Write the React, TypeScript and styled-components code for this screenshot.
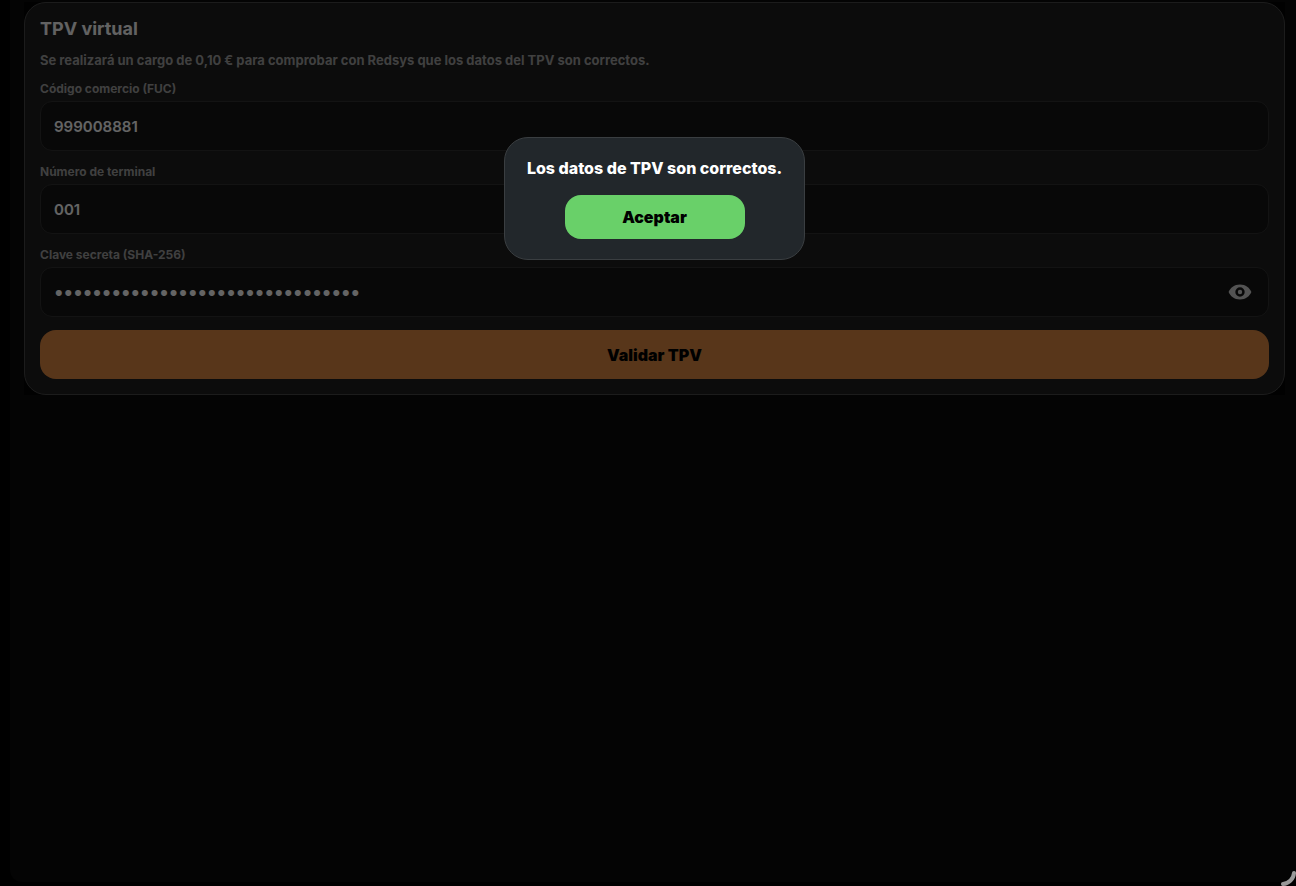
import React, { useState } from "react";
import styled, { createGlobalStyle } from "styled-components";

const GlobalStyle = createGlobalStyle`
  * { box-sizing: border-box; }
  body {
    margin: 0;
    background: #000;
    font-family: Inter, "Liberation Sans", sans-serif;
    font-weight: 600;
  }
  button, input { font: inherit; }
`;

const Screen = styled.main`
  min-height: calc(100vh - 4px);
  margin-left: 10px;
  padding: 2px 11px 16px 14px;
  background: #040404;
  border-radius: 0 0 12px 12px;
`;

const Card = styled.form`
  position: relative;
  display: flex;
  flex-direction: column;
  gap: 13px;
  padding: 15px;
  background: #1e1e1e;
  border: 1px solid #484848;
  border-radius: 22px;
`;

const Title = styled.h1`
  margin: 0;
  font-size: 18px;
  line-height: 22px;
  font-weight: 700;
  color: #f5f5f5;
`;

const Hint = styled.p`
  margin: 0;
  font-size: 13px;
  line-height: 15px;
  font-weight: 700;
  color: #a0a0a0;
`;

const Field = styled.div`
  display: flex;
  flex-direction: column;
  gap: 4px;
`;

const Label = styled.label`
  font-size: 12px;
  line-height: 16px;
  font-weight: 700;
  color: #a0a0a0;
`;

const InputBox = styled.div`
  display: flex;
  align-items: center;
  height: 50px;
  padding: 0 16px 0 13px;
  background: #161616;
  border: 1px solid #303030;
  border-radius: 12px;
`;

const Input = styled.input`
  flex: 1;
  min-width: 0;
  height: 100%;
  padding: 0;
  border: 0;
  outline: 0;
  background: transparent;
  font-size: ${(p) => (p.type === "password" ? "19px" : "15px")};
  color: #fafafa;
`;

const IconButton = styled.button`
  display: flex;
  padding: 0;
  border: 0;
  background: transparent;
  color: #d0d0d0;
  cursor: pointer;
`;

const PrimaryButton = styled.button`
  height: 49px;
  border: 0;
  border-radius: 16px;
  background: #dc8741;
  color: #000;
  font-size: 16px;
  font-weight: 900;
  cursor: pointer;
`;

const Overlay = styled.div`
  position: absolute;
  inset: -1px;
  display: flex;
  align-items: center;
  justify-content: center;
  background: rgba(0, 0, 0, 0.6);
`;

const Dialog = styled.div`
  display: flex;
  flex-direction: column;
  align-items: center;
  gap: 17px;
  padding: 20px 22px;
  background: #22272b;
  border: 1px solid #3a3e41;
  border-radius: 24px;
`;

const Message = styled.p`
  margin: 0;
  font-size: 16px;
  line-height: 20px;
  font-weight: 800;
  color: #fff;
`;

const AcceptButton = styled.button`
  width: 180px;
  height: 44px;
  border: 0;
  border-radius: 16px;
  background: #69d069;
  color: #000;
  font-size: 16px;
  font-weight: 900;
  cursor: pointer;
`;

const CornerMark = styled.svg`
  position: fixed;
  right: 0;
  bottom: 0;
`;

const EyeIcon = () => (
  <svg width="24" height="24" viewBox="0 0 24 24" aria-hidden="true">
    <path
      fill="currentColor"
      fillRule="evenodd"
      d="M12 4.5C6.4 4.5 2.2 8 .6 12c1.600 4 5.800 7.500 11.400 7.500s9.800-3.500 11.400-7.500C21.800 8 17.600 4.500 12 4.500zM12 7.300a4.700 4.700 0 1 1 0 9.400a4.700 4.700 0 0 1 0-9.400z"
    />
    <circle cx="12" cy="12" r="2.200" fill="currentColor" />
  </svg>
);

interface TextFieldProps {
  id: string;
  label: string;
  initial: string;
  secret?: boolean;
}

function TextField({ id, label, initial, secret = false }: TextFieldProps) {
  const [value, setValue] = useState(initial);
  const [visible, setVisible] = useState(!secret);
  return (
    <Field>
      <Label htmlFor={id}>{label}</Label>
      <InputBox>
        <Input
          id={id}
          type={visible ? "text" : "password"}
          autoComplete="off"
          value={value}
          onChange={(e) => setValue(e.target.value)}
        />
        {secret && (
          <IconButton type="button" aria-label="Mostrar clave" onClick={() => setVisible(!visible)}>
            <EyeIcon />
          </IconButton>
        )}
      </InputBox>
    </Field>
  );
}

export default function App() {
  const [open, setOpen] = useState(true);
  return (
    <>
      <GlobalStyle />
      <Screen>
        <Card
          onSubmit={(e) => {
            e.preventDefault();
            setOpen(true);
          }}
        >
          <Title>TPV virtual</Title>
          <Hint>Se realizará un cargo de 0,10 € para comprobar con Redsys que los datos del TPV son correctos.</Hint>
          <TextField id="fuc" label="Código comercio (FUC)" initial="999008881" />
          <TextField id="terminal" label="Número de terminal" initial="001" />
          <TextField id="clave" label="Clave secreta (SHA-256)" initial={"x".repeat(32)} secret />
          <PrimaryButton type="submit">Validar TPV</PrimaryButton>
          {open && (
            <Overlay>
              <Dialog role="alertdialog" aria-labelledby="mensaje">
                <Message id="mensaje">Los datos de TPV son correctos.</Message>
                <AcceptButton type="button" onClick={() => setOpen(false)}>
                  Aceptar
                </AcceptButton>
              </Dialog>
            </Overlay>
          )}
        </Card>
      </Screen>
      <CornerMark width="18" height="18" viewBox="0 0 18 18" aria-hidden="true">
        <path d="M16 5A12 12 0 0 1 5 16" fill="none" stroke="#999" strokeWidth="4" strokeLinecap="round" />
      </CornerMark>
    </>
  );
}
